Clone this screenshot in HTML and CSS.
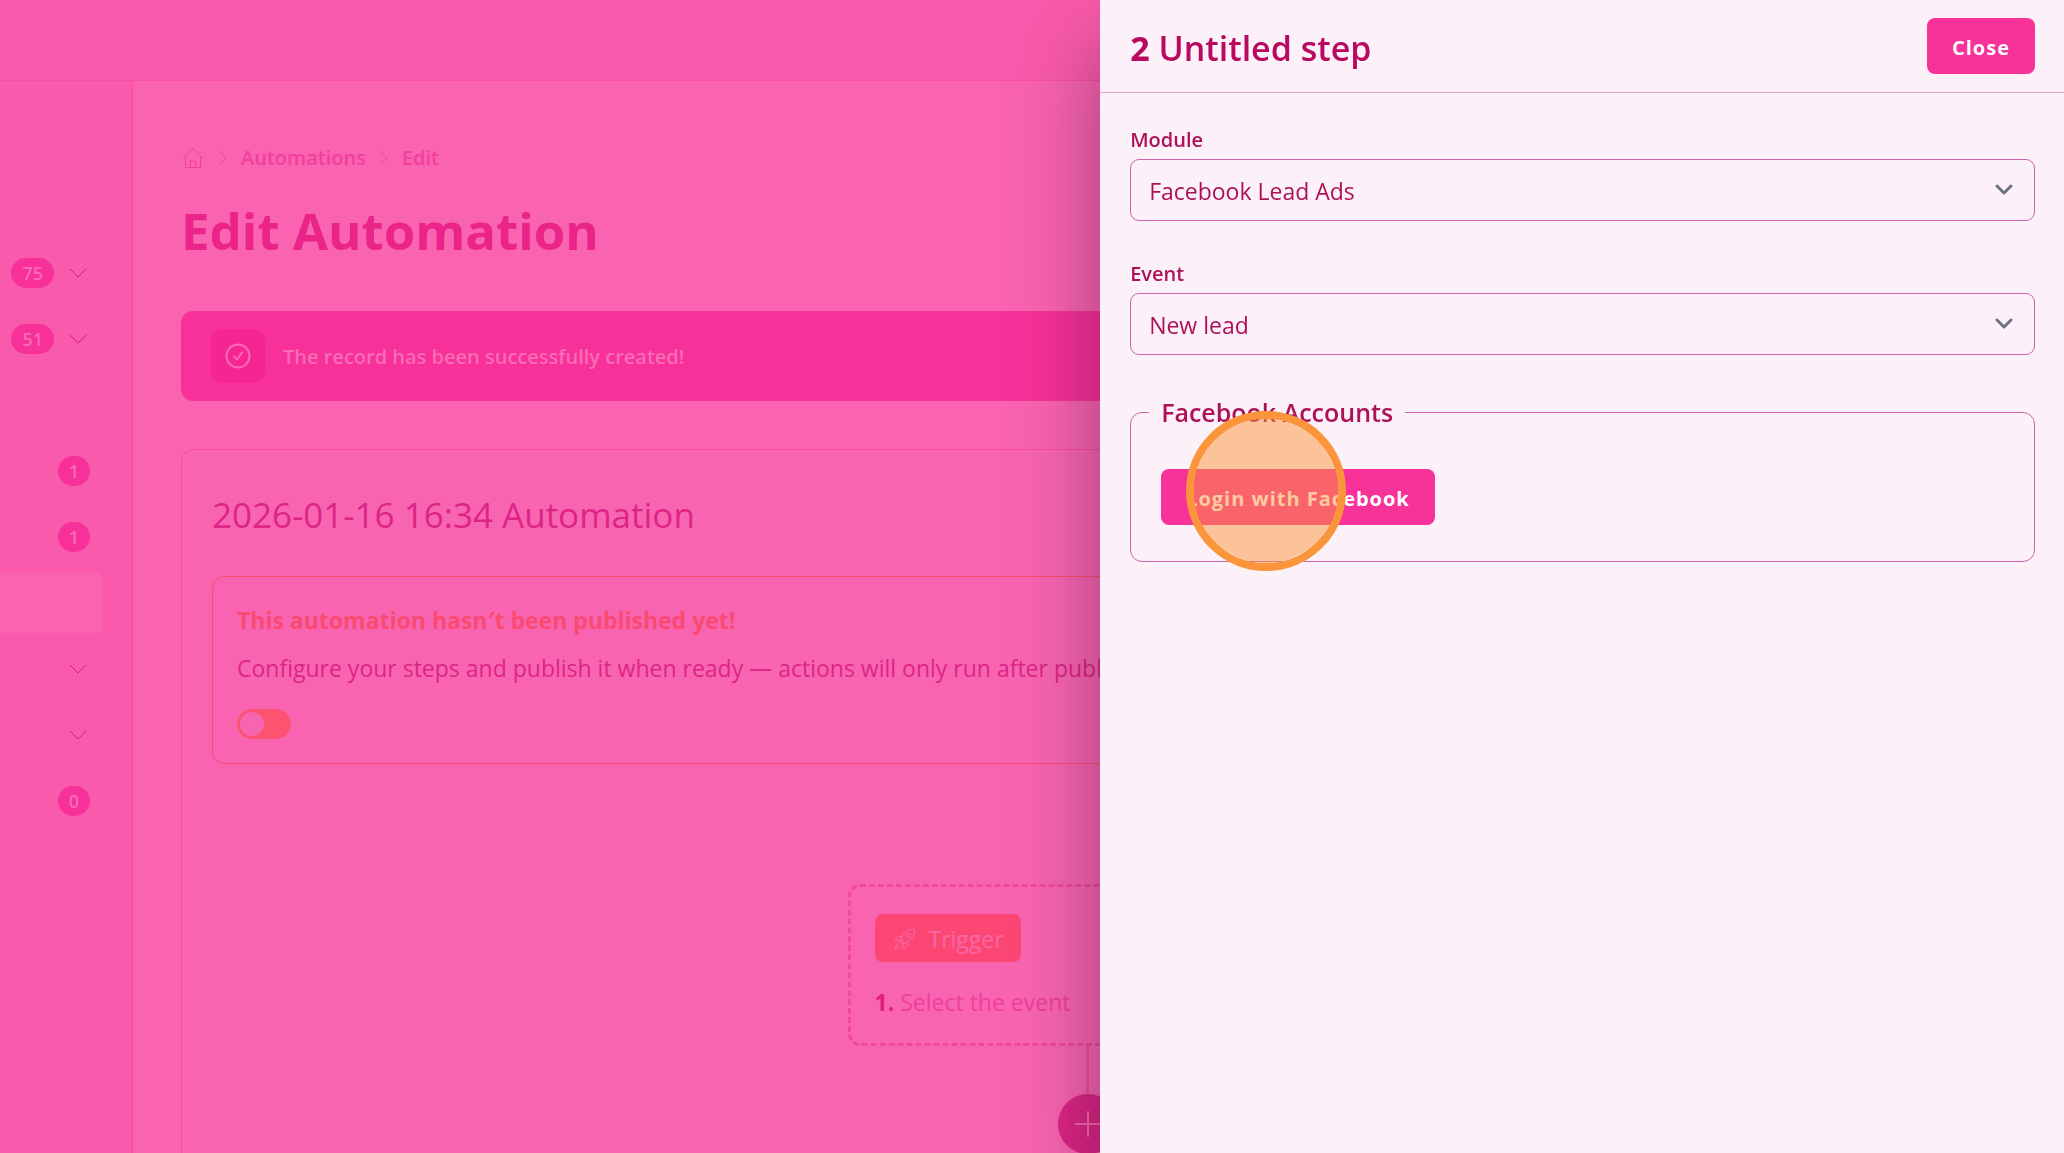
FILE: index.html
```html
<!DOCTYPE html>
<html lang="en">
<head>
    <meta charset="UTF-8">
    <meta name="viewport" content="width=device-width, initial-scale=1.0">
    <title>Edit Automation</title>
    <link rel="stylesheet" href="styles.css">
</head>
<body>
  <div class="app">
    <header class="topbar"></header>
    <div class="layout">
      <nav class="sidebar">
        <div class="nav-row">
          <span class="badge">75</span>
          <svg class="chevron" viewBox="0 0 24 16"><path d="M4 4l8 8 8-8"/></svg>
        </div>
        <div class="nav-row">
          <span class="badge">51</span>
          <svg class="chevron" viewBox="0 0 24 16"><path d="M4 4l8 8 8-8"/></svg>
        </div>
        <div class="nav-row"></div>
        <div class="nav-row"><span class="badge">1</span></div>
        <div class="nav-row"><span class="badge">1</span></div>
        <div class="nav-row active"></div>
        <div class="nav-row">
          <svg class="chevron" viewBox="0 0 24 16"><path d="M4 4l8 8 8-8"/></svg>
        </div>
        <div class="nav-row">
          <svg class="chevron" viewBox="0 0 24 16"><path d="M4 4l8 8 8-8"/></svg>
        </div>
        <div class="nav-row"><span class="badge">0</span></div>
      </nav>

      <main class="main">
        <div class="breadcrumb">
          <a href="#" aria-label="Home">
            <svg class="home" viewBox="0 0 22 22"><path d="M1 11.500L11 1.500l10 10M3.500 9.500V20.500h15V9.500M8.500 20.500v-6.500h5v6.500"/></svg>
          </a>
          <svg class="separator" viewBox="0 0 8 14"><path d="M1 1l6 6-6 6"/></svg>
          <a href="#">Automations</a>
          <svg class="separator" viewBox="0 0 8 14"><path d="M1 1l6 6-6 6"/></svg>
          <a href="#">Edit</a>
        </div>
        <h1>Edit Automation</h1>

        <div class="alert">
          <span class="alert-icon">
            <svg viewBox="0 0 26 26"><circle cx="13" cy="13" r="11.500"/><path d="M9 13.500l3 3 5-7"/></svg>
          </span>
          <p>The record has been successfully created!</p>
        </div>

        <section class="card">
          <h2>2026-01-16 16:34 Automation</h2>
          <div class="notice">
            <h3>This automation hasn′t been published yet!</h3>
            <p>Configure your steps and publish it when ready — actions will only run after publishing.</p>
            <input class="toggle" type="checkbox" aria-label="Publish automation">
          </div>

          <div class="flow">
            <div class="step">
              <span class="trigger">
                <svg viewBox="0 0 24 24"><path d="M8 12c2-6 7-10 14-10 0 7-4 12-10 14z"/><circle cx="15.500" cy="8.500" r="2"/><path d="M9 9.500H5.500L2 13.500l5.500 1M14.500 15v3.500l-4 3.500-1-5.500M8 12l4 4-2 1-3-3zM5 16.500c-2 .5-3 2.500-3 5.500 3 0 5-1 5.500-3M2 22l3-3"/></svg>
                Trigger
              </span>
              <p><b>1.</b> Select the event</p>
            </div>
            <div class="connector"></div>
            <button class="add" type="button" aria-label="Add step">
              <svg viewBox="0 0 26 26"><path d="M13 1v24M1 13h24"/></svg>
            </button>
          </div>
        </section>
      </main>
    </div>
  </div>

  <aside class="panel">
    <div class="panel-header">
      <h2><b>2</b> Untitled step</h2>
      <button class="btn" type="button">Close</button>
    </div>
    <form class="panel-body">
      <div class="field">
        <label for="module">Module</label>
        <div class="select-box">
          <select id="module">
            <option>Facebook Lead Ads</option>
          </select>
          <svg viewBox="0 0 18 12"><path d="M2 2l7 7 7-7"/></svg>
        </div>
      </div>
      <div class="field">
        <label for="event">Event</label>
        <div class="select-box">
          <select id="event">
            <option>New lead</option>
          </select>
          <svg viewBox="0 0 18 12"><path d="M2 2l7 7 7-7"/></svg>
        </div>
      </div>
      <fieldset>
        <legend>Facebook Accounts</legend>
        <div class="login">
          <button class="btn" type="button">Login with Facebook</button>
          <span class="click-marker"></span>
        </div>
      </fieldset>
    </form>
  </aside>
</body>
</html>
```
FILE: styles.css
```css
* {
  margin: 0;
  padding: 0;
  box-sizing: border-box;
}

body {
  font-family: "Segoe UI", "Open Sans", sans-serif;
  font-size: 23px;
  line-height: 32px;
  color: #dc2585;
  background-color: #f95aab;
}

svg {
  display: block;
  fill: none;
  stroke: currentColor;
  stroke-linecap: round;
  stroke-linejoin: round;
}

a {
  color: inherit;
  text-decoration: none;
}

/* page behind the panel */
.app {
  height: 100vh;
  overflow: hidden;
  display: flex;
  flex-direction: column;
}

.topbar {
  flex: none;
  height: 81px;
  border-bottom: 1px solid #f74da3;
}

.layout {
  flex: 1;
  display: flex;
  min-height: 0;
}

.sidebar {
  flex: none;
  width: 133px;
  padding-top: 162px;
  padding-right: 30px;
  border-right: 1px solid #f74da3;
  display: flex;
  flex-direction: column;
  gap: 6px;
}

.nav-row {
  height: 60px;
  padding-right: 12px;
  display: flex;
  align-items: center;
  justify-content: flex-end;
  gap: 12px;
  border-radius: 0 6px 6px 0;
}

.nav-row.active {
  background-color: #f963b0;
}

.badge {
  height: 30px;
  padding: 0 11px;
  border-radius: 15px;
  font-size: 18px;
  line-height: 30px;
  font-weight: 600;
  color: #f96cb4;
  background-color: #f8309a;
}

.chevron {
  width: 24px;
  height: 16px;
  color: #d91f80;
}

.main {
  flex: 1;
  min-width: 0;
  padding: 63px 70px 0 48px;
  background-color: #f963b0;
}

.breadcrumb {
  display: flex;
  align-items: center;
  gap: 14px;
  font-size: 20px;
  line-height: 28px;
  font-weight: 600;
  color: #f23f9b;
}

.home {
  width: 24px;
  height: 22px;
}

.separator {
  width: 8px;
  height: 14px;
}

h1 {
  margin-top: 28px;
  font-size: 51px;
  line-height: 60px;
  font-weight: 700;
  color: #ea2489;
}

.alert {
  margin-top: 51px;
  height: 90px;
  padding: 0 30px;
  display: flex;
  align-items: center;
  gap: 18px;
  border-radius: 12px;
  font-size: 20px;
  font-weight: 600;
  color: #f96cb4;
  background-color: #f8309a;
}

.alert p {
  padding-top: 2px;
}

.alert-icon {
  width: 54px;
  height: 54px;
  display: grid;
  place-items: center;
  border-radius: 12px;
  background-color: #f52692;
}

.alert-icon svg {
  width: 26px;
  height: 26px;
  stroke-width: 2;
}

.card {
  margin-top: 48px;
  min-height: 1000px;
  padding: 41px 30px;
  border: 1px solid #f74da3;
  border-radius: 12px;
  background-color: #f964b1;
}

.card h2 {
  font-size: 35px;
  line-height: 48px;
  font-weight: 400;
}

.notice {
  margin-top: 37px;
  padding: 27px 24px 24px;
  border: 1px solid #f8506c;
  border-radius: 12px;
  white-space: nowrap;
  overflow: hidden;
}

.notice h3 {
  margin-bottom: 16px;
  font-size: 23px;
  font-weight: 700;
  color: #fa4a72;
}

.notice p {
  margin-bottom: 25px;
}

.toggle {
  appearance: none;
  display: block;
  width: 54px;
  height: 30px;
  padding: 3px;
  border-radius: 15px;
  background-color: #fc5470;
}

.toggle::before {
  content: "";
  display: block;
  width: 24px;
  height: 24px;
  border-radius: 50%;
  background-color: #f964b1;
}

.flow {
  margin-top: 120px;
  display: flex;
  flex-direction: column;
  align-items: center;
}

.step {
  width: 480px;
  padding: 27px 24px 25px;
  border: 3px dashed #f04a9d;
  border-radius: 12px;
  color: #ee409a;
}

.step b {
  color: #e0207f;
}

.trigger {
  width: 146px;
  height: 48px;
  margin-bottom: 24px;
  padding: 2px 0 0 18px;
  display: flex;
  align-items: center;
  gap: 12px;
  border-radius: 8px;
  color: #f968a5;
  background-color: #fc4775;
}

.trigger svg {
  width: 24px;
  height: 24px;
  stroke-width: 1;
}

.connector {
  width: 3px;
  height: 48px;
  background-color: #f2509f;
}

.add {
  width: 60px;
  height: 60px;
  display: grid;
  place-items: center;
  border: none;
  border-radius: 50%;
  color: #f964b1;
  background-color: #dc2585;
}

.add svg {
  width: 26px;
  height: 26px;
  stroke-width: 2;
}

/* step panel */
.panel {
  position: fixed;
  top: 0;
  right: 0;
  width: 46.7vw;
  height: 100vh;
  color: #ad1259;
  background-color: #fcf1f8;
  box-shadow: 0 44px 80px rgba(0, 0, 0, 0.36);
}

.panel-header {
  height: 93px;
  padding: 0 29px 0 30px;
  display: flex;
  align-items: center;
  justify-content: space-between;
  border-bottom: 1px solid #e5a0cb;
}

.panel-header h2 {
  padding-top: 3px;
  font-size: 34px;
  line-height: 48px;
  font-weight: 600;
  color: #b80860;
}

.panel-header b {
  font-weight: 700;
}

.btn {
  height: 56px;
  padding: 2px 25px 0;
  border: none;
  border-radius: 8px;
  font-family: inherit;
  font-size: 20px;
  font-weight: 700;
  letter-spacing: 1px;
  color: #fff;
  background-color: #f73299;
}

.panel-body {
  padding: 33px 29px 0 30px;
}

.field {
  margin-bottom: 39px;
}

.field label {
  display: block;
  margin-bottom: 5px;
  font-size: 20px;
  line-height: 28px;
  font-weight: 600;
}

.select-box {
  display: grid;
}

.select-box select,
.select-box svg {
  grid-area: 1 / 1;
}

.select-box select {
  appearance: none;
  height: 62px;
  padding: 2px 60px 0 18px;
  border: 1px solid #cc66a9;
  border-radius: 9px;
  font-family: inherit;
  font-size: 23px;
  color: inherit;
  background-color: #fcf1f8;
}

.select-box svg {
  width: 18px;
  height: 12px;
  margin-right: 22px;
  align-self: center;
  justify-self: end;
  color: #6b7280;
  stroke-width: 3;
  pointer-events: none;
}

fieldset {
  padding: 39px 30px 36px;
  border: 1px solid #cc66a9;
  border-radius: 12px;
}

legend {
  margin-left: -12px;
  padding: 0 12px;
  font-size: 25px;
  line-height: 36px;
  font-weight: 600;
}

.login {
  position: relative;
}

.click-marker {
  position: absolute;
  top: -58px;
  left: 25px;
  width: 160px;
  height: 160px;
  border: 8px solid #fb953b;
  border-radius: 50%;
  background-color: rgba(251, 149, 59, 0.5);
  background-clip: padding-box;
  pointer-events: none;
}
```
